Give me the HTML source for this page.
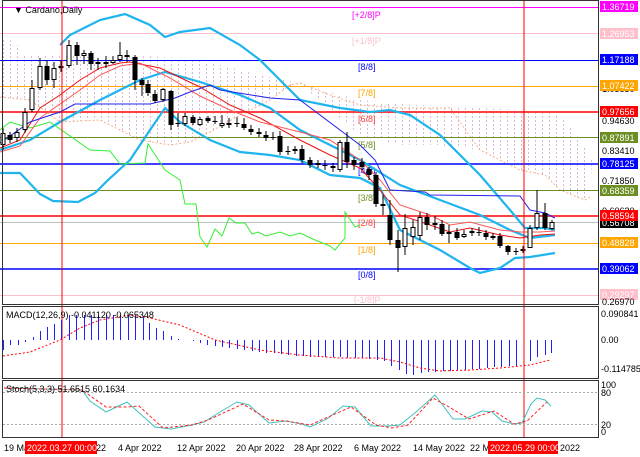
<!DOCTYPE html>
<html><head><meta charset="utf-8"><style>
body{margin:0;background:#fff;width:640px;height:457px;overflow:hidden;font-family:"Liberation Sans",sans-serif}
svg{display:block}
text{font-family:"Liberation Sans",sans-serif;font-size:9px}
</style></head><body>
<svg width="640" height="457" viewBox="0 0 640 457" xmlns="http://www.w3.org/2000/svg">
<defs>
<pattern id="dp" width="7" height="4" patternUnits="userSpaceOnUse"><rect x="3" y="0" width="1" height="2" fill="#d8b8d8"/></pattern>
</defs>
<rect width="640" height="457" fill="#fff"/>
<!-- cloud -->
<path d="M0,37 L15,42 L25,55 L60,55 L100,58 L150,56 L200,60 L260,75 L300,83 L270,100 L240,115 L210,132 L190,142 L170,145 L140,140 L100,120 L60,122 L30,100 L0,97Z" fill="url(#dp)"/>
<path d="M300,83 L340,95 L380,103 L480,108 L530,110 L560,115 L580,140 L592,160 L590,197 L585,200 L560,190 L545,175 L520,170 L500,160 L480,150 L440,145 L400,145 L360,135 L330,110Z" fill="url(#dp)"/>
<polyline points="0,97 30,100 60,122 100,120 140,140 170,145 190,142 210,132 240,115 270,100 290,85 300,83" fill="none" stroke="#f4b088" stroke-dasharray="2,2"/>
<polyline points="300,83 330,95 360,105 400,108 450,108 480,150 500,160 520,170 545,175 560,190 585,200 590,197" fill="none" stroke="#f4b088" stroke-dasharray="2,2"/>
<!-- murrey lines -->
<g stroke-width="1">
<line x1="0" y1="7.5" x2="599" y2="7.5" stroke="#ff00ff"/>
<line x1="0" y1="33.5" x2="599" y2="33.5" stroke="#ffc0cb"/>
<line x1="0" y1="60.5" x2="599" y2="60.5" stroke="#0000ff"/>
<line x1="0" y1="86.5" x2="599" y2="86.5" stroke="#ffa500"/>
<line x1="0" y1="112" x2="599" y2="112" stroke="#ff4040" stroke-width="2"/>
<line x1="0" y1="137.5" x2="599" y2="137.5" stroke="#6b8e23"/>
<line x1="0" y1="164" x2="599" y2="164" stroke="#4040ff" stroke-width="2"/>
<line x1="0" y1="190.5" x2="599" y2="190.5" stroke="#6b8e23"/>
<line x1="0" y1="216" x2="599" y2="216" stroke="#ff4040" stroke-width="2"/>
<line x1="0" y1="222.5" x2="599" y2="222.5" stroke="#c0c0c0"/>
<line x1="0" y1="243.5" x2="599" y2="243.5" stroke="#ffa500"/>
<line x1="0" y1="269" x2="599" y2="269" stroke="#4040ff" stroke-width="2"/>
<line x1="0" y1="295.5" x2="599" y2="295.5" stroke="#ffc0cb"/>
</g>
<g>
<text x="352" y="18" fill="#ff00ff">[+2/8]P</text>
<text x="352" y="44" fill="#ffc0cb">[+1/8]P</text>
<text x="358" y="70" fill="#0000ff">[8/8]</text>
<text x="358" y="96" fill="#ffa500">[7/8]</text>
<text x="358" y="122" fill="#ff4040">[6/8]</text>
<text x="358" y="148" fill="#6b8e23">[5/8]</text>
<text x="358" y="174" fill="#0000ff">[4/8]</text>
<text x="358" y="201" fill="#6b8e23">[3/8]</text>
<text x="358" y="226" fill="#ff4040">[2/8]</text>
<text x="358" y="253" fill="#ffa500">[1/8]</text>
<text x="358" y="278" fill="#0000ff">[0/8]</text>
<text x="354" y="303" fill="#ffc0cb">[-1/8]P</text>
</g>
<!-- bands -->
<g fill="none" stroke="#1eb4ee" stroke-width="2.2">
<polyline points="0,150 30,140 60,122 100,100 140,80 165,72 200,82 240,95 270,108 300,130 330,145 360,160 400,185 440,200 480,215 510,230 530,238 555,235"/>
<polyline points="60,45 70,35 100,20 125,14 150,25 165,37 180,32 210,28 240,45 260,60 280,80 300,100 340,108 370,112 390,110 410,115 440,135 480,175 510,210 525,228 545,228 555,230"/>
<polyline points="0,173 20,173 40,194 53,201 78,202 95,193 108,180 130,160 150,130 165,108 180,122 210,140 240,152 270,155 300,160 330,175 360,178 380,188 400,230 440,250 470,268 480,273 500,268 515,258 530,257 555,253"/>
</g>
<polyline points="0,130 10,122 30,128 50,122 90,150 110,151 120,164 145,163 148,144 165,170 180,180 185,204 196,204 200,237 207,247 215,229 222,236 229,218 236,223 245,223 252,234 258,232 266,236 280,232 290,236 300,233 315,240 330,246 335,250 345,238 345,212 355,227 360,225" fill="none" stroke="#33ee33"/>
<polyline points="0,148 20,140 40,108 60,95 80,80 100,68 120,63 130,62 160,68 200,87 230,105 260,118 300,140 330,155 360,168 380,190 400,215 430,225 450,232 470,228 500,235 520,238 540,235 555,234" fill="none" stroke="#ee1111"/>
<polyline points="0,152 20,146 40,118 60,104 80,90 100,75 120,66 140,63 170,78 200,96 230,110 260,122 300,132 330,140 360,160 380,180 400,205 430,215 450,225 470,222 500,230 520,232 540,232 555,231" fill="none" stroke="#ff5555"/>
<polyline points="0,143 30,122 60,112 75,104 150,104 175,98 190,92 210,85 220,90 270,98 300,100 340,130 360,145 375,160 390,190 425,192 430,195 520,196 530,210 545,213 555,218" fill="none" stroke="#2222ee"/>
<!-- candles -->
<path d="M3,128V150M10,132V143M17,128V142M25,108V133M32,80V112M40,58V90M47,60V85M54,62V88M61,60V72M69,40V68M77,42V65M84,50V64M91,51V70M98,58V70M106,56V68M113,56V64M120,42V62M127,50V62M135,55V90M142,78V96M148,80V96M155,90V103M163,88V102M171,90V130M178,113V127M185,113V126M193,115V125M200,117V126M208,116V123M215,116V124M222,115V128M229,118V128M237,117V127M244,118V130M251,125V135M259,128V137M266,131V141M273,132V140M280,131V155M288,146V155M295,146V154M302,145V163M310,157V168M318,160V168M325,160V170M333,163V172M340,140V172M347,132V168M354,157V170M362,158V170M369,167V180M376,172V207M383,195V215M390,200V245M398,230V272M405,214V255M413,220V245M420,212V240M427,213V230M435,216V230M442,220V236M449,225V243M457,228V240M464,230V238M472,228V236M479,227V236M486,230V240M493,233V240M500,233V248M508,245V255M516,248V255M523,246V253M530,225V248M537,190V230M545,203V230M552,220V230" stroke="#000" fill="none"/>
<path d="M7.5,135h5v5h-5zM44.5,66h5v14h-5zM74.5,45h5v11h-5zM88.5,53h5v11h-5zM103.5,62h5v2h-5zM124.5,55h5v2h-5zM132.5,57h5v23h-5zM139.5,80h5v5h-5zM145.5,84h5v9h-5zM152.5,94h5v7h-5zM168.5,91h5v34h-5zM175.5,123h5v1h-5zM190.5,117h5v6h-5zM205.5,118h5v3h-5zM212.5,121h5v1h-5zM234.5,123h5v1h-5zM241.5,124h5v4h-5zM248.5,129h5v3h-5zM256.5,132h5v2h-5zM263.5,135h5v3h-5zM270.5,137h5v1h-5zM277.5,136h5v16h-5zM285.5,151h5v1h-5zM299.5,149h5v11h-5zM307.5,160h5v5h-5zM315.5,163h5v2h-5zM322.5,165h5v1h-5zM330.5,166h5v2h-5zM344.5,142h5v20h-5zM351.5,160h5v5h-5zM359.5,162h5v5h-5zM366.5,169h5v6h-5zM373.5,175h5v29h-5zM380.5,204h5v2h-5zM387.5,215h5v25h-5zM395.5,240h5v8h-5zM424.5,217h5v8h-5zM432.5,223h5v2h-5zM439.5,224h5v10h-5zM446.5,232h5v2h-5zM454.5,232h5v6h-5zM476.5,232h5v1h-5zM483.5,233h5v4h-5zM490.5,236h5v2h-5zM497.5,236h5v10h-5zM505.5,246h5v6h-5zM513.5,251h5v1h-5zM542.5,213h5v15h-5z" fill="#000"/>
<path d="M1,133.5h4v11h-4zM15,132.5h4v5h-4zM23,112.5h4v17h-4zM30,88.5h4v21h-4zM38,66.5h4v21h-4zM52,68.5h4v11h-4zM59,66.5h4v1h-4zM67,45.5h4v20h-4zM82,53.5h4v2h-4zM96,62.5h4v1h-4zM111,60.5h4v2h-4zM118,55.5h4v4h-4zM161,89.5h4v10h-4zM183,116.5h4v7h-4zM198,119.5h4v5h-4zM220,123.5h4v2h-4zM227,123.5h4v1h-4zM293,149.5h4v1h-4zM338,142.5h4v27h-4zM403,228.5h4v18h-4zM411,227.5h4v9h-4zM418,217.5h4v18h-4zM462,234.5h4v2h-4zM470,231.5h4v1h-4zM521,249.5h4v1h-4zM528,228.5h4v19h-4zM535,213.5h4v14h-4zM550,222.5h4v6h-4z" fill="#fff" stroke="#000"/>
<text x="14" y="13" fill="#000">▼ Cardano,Daily</text>
<!-- vertical red lines -->
<line x1="62" y1="0" x2="62" y2="438" stroke="#ff0000"/>
<line x1="524" y1="0" x2="524" y2="438" stroke="#ff0000"/>
<!-- panel frames -->
<g fill="none" stroke="#333">
<rect x="2.5" y="0.5" width="596" height="304"/>
<rect x="2.5" y="306.5" width="596" height="72"/>
<rect x="2.5" y="380.5" width="596" height="57"/>
</g>
<!-- right labels -->
<g>
<rect x="600" y="1" width="38" height="11" fill="#ff00ff"/><text x="602" y="10" fill="#fff">1.36719</text>
<rect x="600" y="28" width="38" height="11" fill="#ffc0cb"/><text x="602" y="37" fill="#fff">1.26953</text>
<rect x="600" y="54" width="38" height="11" fill="#0000ff"/><text x="602" y="63" fill="#fff">1.17188</text>
<text x="602" y="92" fill="#000">1.03830</text>
<rect x="600" y="80" width="38" height="11" fill="#ffa500"/><text x="602" y="89" fill="#fff">1.07422</text>
<rect x="600" y="106" width="38" height="11" fill="#ff0000"/><text x="602" y="115" fill="#fff">0.97656</text>
<text x="602" y="124" fill="#000">0.94630</text>
<rect x="600" y="132" width="38" height="11" fill="#6b8e23"/><text x="602" y="141" fill="#fff">0.87891</text>
<text x="602" y="154" fill="#000">0.83410</text>
<rect x="600" y="158" width="38" height="11" fill="#0000ff"/><text x="602" y="167" fill="#fff">0.78125</text>
<text x="602" y="184" fill="#000">0.71850</text>
<rect x="600" y="185" width="38" height="11" fill="#6b8e23"/><text x="602" y="194" fill="#fff">0.68359</text>
<text x="602" y="214" fill="#000">0.60620</text>
<rect x="600" y="217" width="38" height="11" fill="#000"/><text x="602" y="226" fill="#fff">0.56708</text>
<rect x="600" y="210" width="38" height="11" fill="#ff0000"/><text x="602" y="219" fill="#fff">0.58594</text>
<rect x="600" y="237" width="38" height="11" fill="#ffa500"/><text x="602" y="246" fill="#fff">0.48828</text>
<rect x="600" y="263" width="38" height="11" fill="#0000ff"/><text x="602" y="272" fill="#fff">0.39062</text>
<rect x="600" y="289" width="38" height="11" fill="#ffc0cb"/><text x="602" y="298" fill="#fff">0.29297</text>
<text x="602" y="305" fill="#000">0.26970</text>
<text x="601" y="317" fill="#000">0.090841</text>
<text x="601" y="343" fill="#000">0.00</text>
<text x="601" y="372" fill="#000">-0.114785</text>
<text x="601" y="388" fill="#000">100</text>
<text x="601" y="396" fill="#000">80</text>
<text x="601" y="428" fill="#000">20</text>
<text x="601" y="435" fill="#000">0</text>
</g>
<!-- MACD -->
<path d="M3.5,340V350M10.5,340V345M18.5,340V345M25.5,340V342M33.5,340V337M40.5,340V331M47.5,340V327M54.5,340V324M61.5,340V320M69.5,340V315M76.5,340V315M84.5,340V315M91.5,340V315M98.5,340V315M106.5,340V315M113.5,340V315M120.5,340V315M128.5,340V315M135.5,340V315M143.5,340V316M149.5,340V323M156.5,340V328M163.5,340V331M171.5,340V336M178.5,340V339M193.5,340V341M200.5,340V343M207.5,340V345M215.5,340V346M222.5,340V347M229.5,340V348M237.5,340V349M244.5,340V350M252.5,340V351M259.5,340V352M266.5,340V353M274.5,340V353M281.5,340V354M288.5,340V355M296.5,340V356M303.5,340V356M310.5,340V357M318.5,340V357M325.5,340V357M333.5,340V357M340.5,340V357M347.5,340V358M355.5,340V358M362.5,340V358M369.5,340V359M377.5,340V360M384.5,340V361M391.5,340V366M399.5,340V370M406.5,340V374M413.5,340V375M421.5,340V373M428.5,340V372M435.5,340V372M443.5,340V371M450.5,340V371M457.5,340V370M465.5,340V370M472.5,340V369M479.5,340V369M487.5,340V368M494.5,340V367M501.5,340V367M509.5,340V366M516.5,340V366M530.5,340V361M537.5,340V357M545.5,340V355M551.5,340V353" stroke="#2020ff" fill="none"/>
<polyline points="3,356 30,352 60,340 80,328 100,320 130,315 150,318 180,325 215,340 260,350 300,355 340,358 380,358 400,362 420,368 440,371 470,370 500,368 530,365 550,360" fill="none" stroke="#ff0000" stroke-dasharray="2,2"/>
<text x="6" y="318" fill="#000">MACD(12,26,9) -0.041120 -0.065348</text>
<!-- Stoch -->
<line x1="3" y1="392.5" x2="598" y2="392.5" stroke="#aaa" stroke-dasharray="2,2"/>
<line x1="3" y1="424.5" x2="598" y2="424.5" stroke="#aaa" stroke-dasharray="2,2"/>
<polyline points="4,388 82,390 90,401 106,412 127,402 155,427 171,429 192,425 204,422 220,412 237,402 249,405 269,423 286,421 302,424 310,427 327,419 343,406 355,407 371,426 388,426 400,425 416,412 435,395 453,419 465,419 482,411 492,412 502,421 514,424 522,423 531,404 537,398 545,400 551,406" fill="none" stroke="#40c0c0"/>
<polyline points="4,388 82,390 106,407 127,407 139,406 163,428 192,425 208,420 243,404 269,420 286,421 310,425 351,407 376,425 392,428 408,425 433,398 449,407 469,419 494,411 514,424 527,421 547,402" fill="none" stroke="#ff2020" stroke-dasharray="3,2"/>
<text x="6" y="392" fill="#000">Stoch(5,3,3) 51.6515 60.1634</text>
<!-- dates -->
<g fill="#000">
<text x="4" y="451">19 Ma</text>
<text x="96" y="451">22</text>
<text x="118" y="451">4 Apr 2022</text>
<text x="177" y="451">12 Apr 2022</text>
<text x="236" y="451">20 Apr 2022</text>
<text x="294" y="451">28 Apr 2022</text>
<text x="354" y="451">6 May 2022</text>
<text x="413" y="451">14 May 2022</text>
<text x="470" y="451">22 M</text>
<text x="560" y="451">2022</text>
</g>
<rect x="25" y="441" width="72" height="13" fill="#ff0000"/><text x="27" y="451" fill="#fff">2022.03.27 00:00</text>
<rect x="488" y="441" width="70" height="13" fill="#ff0000"/><text x="490" y="451" fill="#fff">2022.05.29 00:00</text>
</svg>
</body></html>
